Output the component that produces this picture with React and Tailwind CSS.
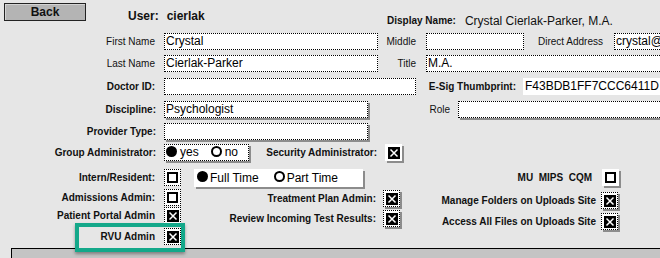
import React from 'react';

// field outline styles
const dotted = 'border border-dotted border-black';
const raised = 'shadow-[2px_2px_0_#8c8c8c]';

const Label = ({ w, pr, bold, children }) => (
  <div
    className={`shrink-0 text-right text-[10px] leading-[17px] text-[#111] whitespace-nowrap ${bold ? 'font-bold' : ''}`}
    style={{ width: w, paddingRight: pr }}
  >
    {children}
  </div>
);

const Field = ({ w, className = '', children }) => (
  <div
    className={`shrink-0 h-[17px] bg-white text-[12px] leading-[15px] pl-[1px] text-black whitespace-nowrap overflow-hidden ${className}`}
    style={{ width: w }}
  >
    {children}
  </div>
);

const CheckMark = () => (
  <svg width="12" height="12" viewBox="0 0 12 12">
    <rect x="0" y="0" width="12" height="12" fill="#000" />
    <path d="M2.5 2.5 L9.5 9.5 M9.5 2.5 L2.5 9.5" stroke="#fff" strokeWidth="1.5" />
  </svg>
);

const Checkbox = ({ checked, outline, shadow }) => (
  <div
    className={`shrink-0 w-[17px] h-[17px] bg-white flex items-center justify-center ${outline ? dotted : ''} ${shadow ? raised : ''}`}
  >
    {checked ? <CheckMark /> : <div className="w-[11px] h-[11px] border-2 border-black bg-white" />}
  </div>
);

const Dot = ({ on }) =>
  on ? (
    <span className="inline-block w-[11px] h-[11px] rounded-full bg-black" />
  ) : (
    <span className="inline-block w-[11px] h-[11px] rounded-full border-2 border-black bg-white" />
  );

export default function App() {
  return (
    <div
      className="w-[660px] h-[258px] overflow-hidden bg-[#e6e6e6] text-black"
      style={{ fontFamily: '"Liberation Sans", Arial, sans-serif' }}
    >
      {/* header */}
      <div className="flex h-[33px]">
        <button className="mt-[3px] ml-[4px] w-[82px] h-[18px] bg-[#b4b4b4] border border-[#222] text-[12px] font-bold leading-[16px] text-[#111] shadow-[inset_1px_1px_0_#d4d4d4]">
          Back
        </button>
        <div className="ml-[42px] w-[259px] mt-[9px] flex text-[12px] font-bold leading-[14px] text-[#111]">
          <span>User:</span>
          <span className="ml-[8px]">cierlak</span>
        </div>
        <div className="mt-[9px] flex items-center text-[#111] whitespace-nowrap">
          <span className="text-[10px] font-bold leading-[14px]">Display Name:</span>
          <span className="ml-[9px] text-[12px] leading-[14px]">Crystal Cierlak-Parker, M.A.</span>
        </div>
      </div>

      {/* first name */}
      <div className="flex h-[17px]">
        <Label w={164} pr={9}>First Name</Label>
        <Field w={214} className={dotted}>Crystal</Field>
        <Label w={48} pr={10}>Middle</Label>
        <Field w={98} className={dotted} />
        <Label w={90} pr={11}>Direct Address</Label>
        <Field w={60} className={dotted}>crystal@</Field>
      </div>

      {/* last name */}
      <div className="flex h-[17px] mt-[5px]">
        <Label w={164} pr={9}>Last Name</Label>
        <Field w={214} className={dotted}>Cierlak-Parker</Field>
        <Label w={48} pr={10}>Title</Label>
        <Field w={240} className={dotted}>M.A.</Field>
      </div>

      {/* doctor id */}
      <div className="flex h-[17px] mt-[6px]">
        <Label w={164} pr={9} bold>Doctor ID:</Label>
        <Field w={252} className={dotted} />
        <Label w={107} pr={7} bold>E-Sig Thumbprint:</Label>
        <Field w={140} className="pl-[2px] leading-[16px]">F43BDB1FF7CCC6411D</Field>
      </div>

      {/* discipline */}
      <div className="flex h-[17px] mt-[6px]">
        <Label w={164} pr={8} bold>Discipline:</Label>
        <Field w={204} className={`${dotted} ${raised} bg-[#84bbf8] text-[#0a0a40]`}>Psychologist</Field>
        <Label w={90} pr={8}>Role</Label>
        <Field w={210} className={`${dotted} ${raised}`} />
      </div>

      {/* provider type */}
      <div className="flex h-[17px] mt-[5px]">
        <Label w={164} pr={8} bold>Provider Type:</Label>
        <Field w={204} className={`${dotted} ${raised}`} />
      </div>

      {/* group admin */}
      <div className="flex h-[17px] mt-[4px]">
        <Label w={164} pr={8} bold>Group Administrator:</Label>
        <div className={`shrink-0 w-[85px] h-[17px] bg-white flex items-center text-[12px] ${dotted} ${raised}`}>
          <span className="ml-[1px]"><Dot on /></span>
          <span className="ml-[3px] leading-[15px]">yes</span>
          <span className="ml-[12px]"><Dot /></span>
          <span className="ml-[3px] leading-[15px]">no</span>
        </div>
        <Label w={136} pr={8} bold>Security Administrator:</Label>
        <Checkbox checked shadow />
      </div>

      {/* checkbox columns */}
      <div className="flex h-[79px] mt-[8px]">
        <div className="w-[190px] shrink-0">
          <div className="flex h-[17px]">
            <Label w={164} pr={9} bold>Intern/Resident:</Label>
            <Checkbox outline />
          </div>
          <div className="flex h-[17px] mt-[3px]">
            <Label w={164} pr={9} bold>Admissions Admin:</Label>
            <Checkbox outline />
          </div>
          <div className="flex h-[17px] mt-[1px]">
            <Label w={164} pr={9} bold>Patient Portal Admin</Label>
            <Checkbox checked outline />
          </div>
          <div className="relative flex h-[17px] mt-[4px]">
            <Label w={164} pr={9} bold>RVU Admin</Label>
            <Checkbox checked outline />
            <div className="absolute left-[75px] top-[-5px] w-[110px] h-[29px] border-4 border-[#14a88a] shadow-[0_2px_3px_rgba(0,0,0,0.35)]" />
          </div>
        </div>

        <div className="w-[230px] shrink-0">
          <div className={`ml-[4px] w-[169px] h-[18px] bg-white flex items-center text-[12px] ${raised}`}>
            <span className="ml-[3px]"><Dot on /></span>
            <span className="ml-[2px] leading-[16px]">Full Time</span>
            <span className="ml-[15px]"><Dot /></span>
            <span className="ml-[2px] leading-[16px]">Part Time</span>
          </div>
          <div className="flex h-[17px] mt-[3px]">
            <Label w={193} pr={7} bold>Treatment Plan Admin:</Label>
            <Checkbox checked outline shadow />
          </div>
          <div className="flex h-[17px] mt-[3px]">
            <Label w={193} pr={7} bold>Review Incoming Test Results:</Label>
            <Checkbox checked outline shadow />
          </div>
        </div>

        <div className="shrink-0">
          <div className="flex h-[17px]">
            <Label w={182} pr={10} bold>MU&nbsp;&nbsp;MIPS&nbsp;&nbsp;CQM</Label>
            <Checkbox shadow />
          </div>
          <div className="flex h-[17px] mt-[6px]">
            <Label w={181} pr={5} bold>Manage Folders on Uploads Site</Label>
            <Checkbox checked outline shadow />
          </div>
          <div className="flex h-[17px] mt-[4px]">
            <Label w={181} pr={5} bold>Access All Files on Uploads Site</Label>
            <Checkbox checked outline shadow />
          </div>
        </div>
      </div>

      {/* bottom panel */}
      <div className="ml-[11px] h-[10px] border-l border-t border-black bg-[#c4c4c4]" />
    </div>
  );
}
